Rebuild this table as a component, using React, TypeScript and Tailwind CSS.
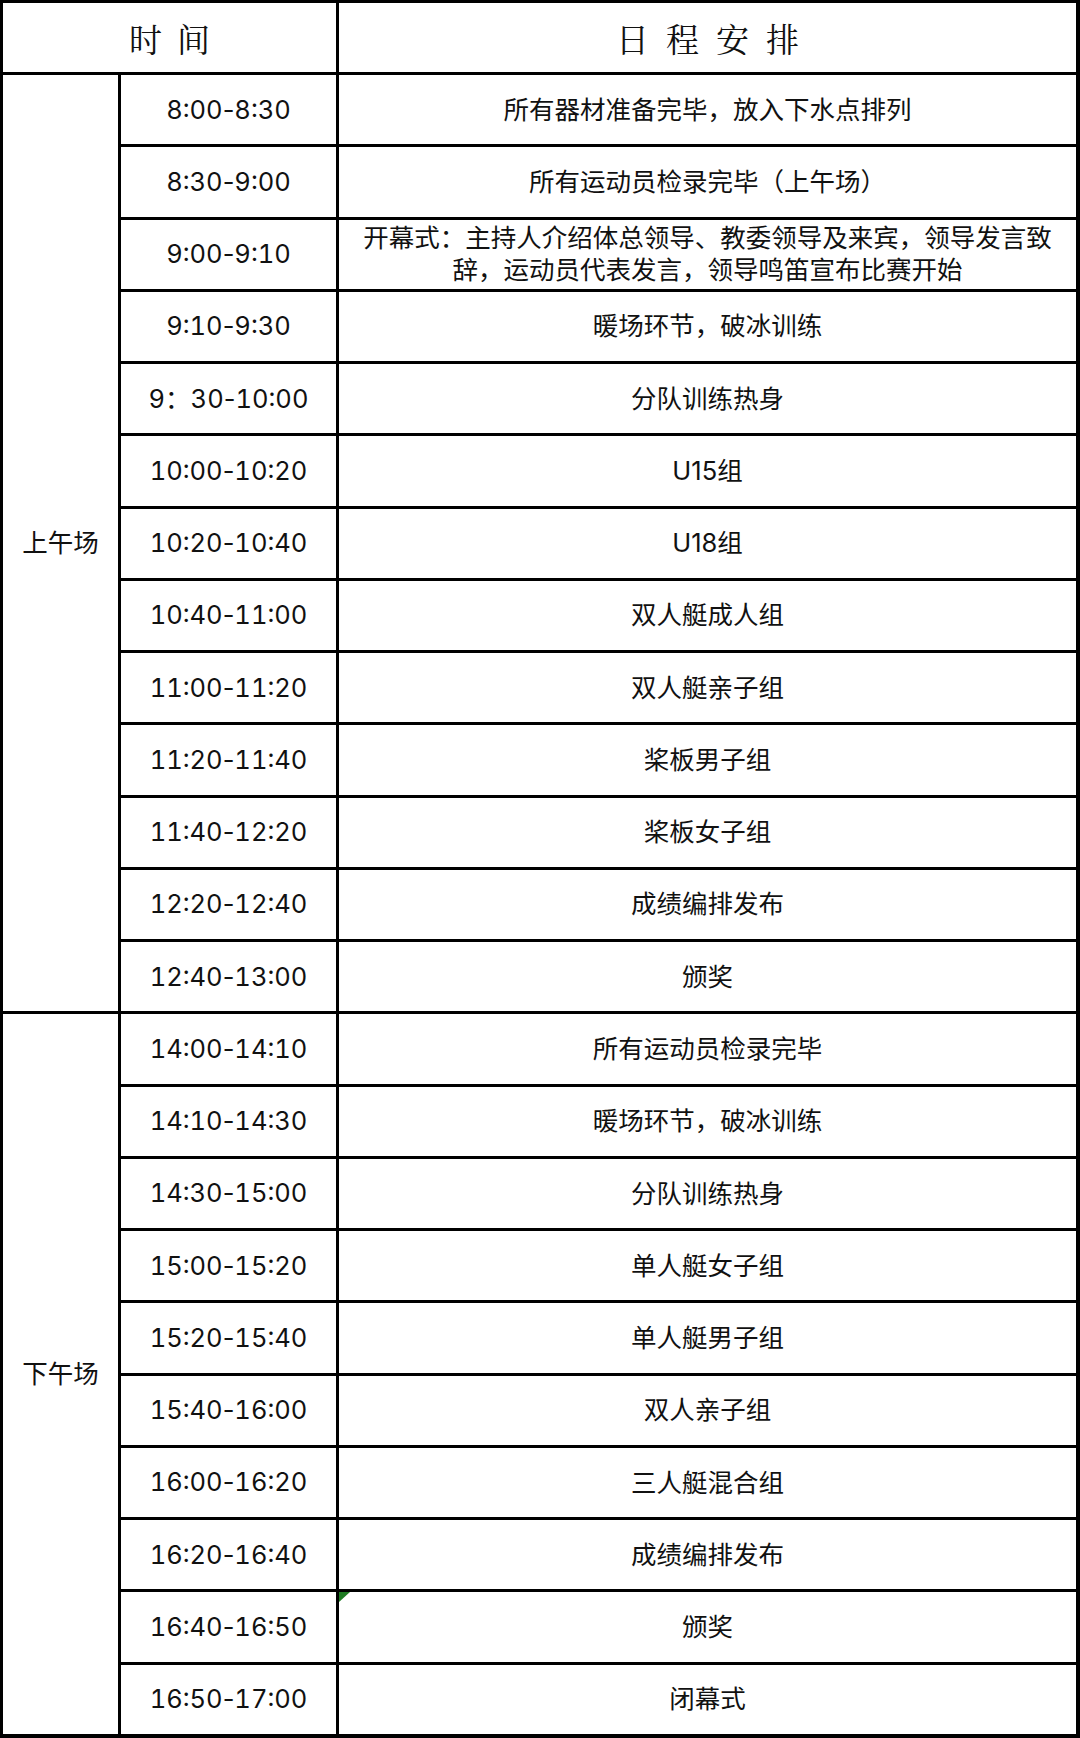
import React from "react";

interface Slot {
  time: string;
  event: string;
}

const morning: Slot[] = [
  { time: "8:00-8:30", event: "所有器材准备完毕，放入下水点排列" },
  { time: "8:30-9:00", event: "所有运动员检录完毕（上午场）" },
  {
    time: "9:00-9:10",
    event:
      "开幕式：主持人介绍体总领导、教委领导及来宾，领导发言致辞，运动员代表发言，领导鸣笛宣布比赛开始",
  },
  { time: "9:10-9:30", event: "暖场环节，破冰训练" },
  { time: "9：30-10:00", event: "分队训练热身" },
  { time: "10:00-10:20", event: "U15组" },
  { time: "10:20-10:40", event: "U18组" },
  { time: "10:40-11:00", event: "双人艇成人组" },
  { time: "11:00-11:20", event: "双人艇亲子组" },
  { time: "11:20-11:40", event: "桨板男子组" },
  { time: "11:40-12:20", event: "桨板女子组" },
  { time: "12:20-12:40", event: "成绩编排发布" },
  { time: "12:40-13:00", event: "颁奖" },
];

const afternoon: Slot[] = [
  { time: "14:00-14:10", event: "所有运动员检录完毕" },
  { time: "14:10-14:30", event: "暖场环节，破冰训练" },
  { time: "14:30-15:00", event: "分队训练热身" },
  { time: "15:00-15:20", event: "单人艇女子组" },
  { time: "15:20-15:40", event: "单人艇男子组" },
  { time: "15:40-16:00", event: "双人亲子组" },
  { time: "16:00-16:20", event: "三人艇混合组" },
  { time: "16:20-16:40", event: "成绩编排发布" },
  { time: "16:40-16:50", event: "颁奖" },
  { time: "16:50-17:00", event: "闭幕式" },
];

const cjk = "font-['Inter','Noto_Sans_CJK_SC',sans-serif]";

// digits tabular, but keep the dash narrow
const Time = ({ value }: { value: string }) => {
  const [from, to] = value.split("-");
  return (
    <span className="tabular-nums">
      {from}
      <span className="normal-nums">-</span>
      {to}
    </span>
  );
};

const Row = ({ slot, marker }: { slot: Slot; marker?: boolean }) => (
  <>
    <div className="bg-white flex items-center justify-center text-[25.5px] text-[#111]">
      <Time value={slot.time} />
    </div>
    <div className="relative bg-white flex items-center justify-center px-[18px] text-center text-[25.5px] leading-[32px] text-[#111]">
      {/* little comment marker left over from the spreadsheet */}
      {marker && (
        <svg
          className="absolute left-0 top-0"
          width="11"
          height="10"
          viewBox="0 0 11 10"
        >
          <polygon points="0,0 11,0 0,10" fill="#1e7b22" />
        </svg>
      )}
      {slot.event}
    </div>
  </>
);

export default function App() {
  return (
    <div className="w-[1080px] h-[1738px] bg-white">
      <div
        className={`${cjk} h-full bg-black pt-[3px] pl-[3px] pr-[4px] pb-[4px] grid grid-cols-[115px_215px_1fr] grid-rows-[69px_repeat(23,minmax(0,1fr))] gap-[3px]`}
      >
        <div className="col-span-2 bg-white flex items-center justify-center gap-[15px] text-[33px] text-[#111] font-['Noto_Serif_CJK_SC','Noto_Sans_CJK_SC',serif]">
          <span>时</span>
          <span>间</span>
        </div>
        <div className="bg-white flex items-center justify-center gap-[17px] text-[33px] text-[#111] font-['Noto_Serif_CJK_SC','Noto_Sans_CJK_SC',serif]">
          <span>日</span>
          <span>程</span>
          <span>安</span>
          <span>排</span>
        </div>

        <div className="row-span-13 bg-white flex items-center justify-center text-[25.5px] text-[#111]">
          上午场
        </div>
        {morning.map((s) => (
          <Row key={s.time} slot={s} />
        ))}

        <div className="row-span-10 bg-white flex items-center justify-center text-[25.5px] text-[#111]">
          下午场
        </div>
        {afternoon.map((s) => (
          <Row key={s.time} slot={s} marker={s.time === "16:40-16:50"} />
        ))}
      </div>
    </div>
  );
}
